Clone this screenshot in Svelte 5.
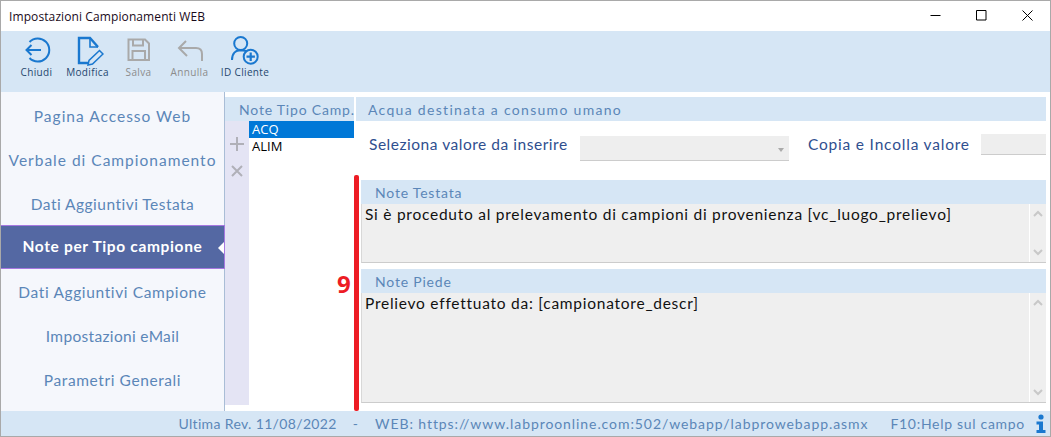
<script lang="ts">
	const tools = [
		{ id: 'close', label: 'Chiudi' },
		{ id: 'edit', label: 'Modifica' },
		{ id: 'save', label: 'Salva', disabled: true },
		{ id: 'undo', label: 'Annulla', disabled: true },
		{ id: 'client', label: 'ID Cliente', wide: true }
	];
	// track: letter spacing per label, the original font has uneven widths
	const pages = [
		{ label: 'Pagina Accesso Web', track: 1 },
		{ label: 'Verbale di Campionamento', track: 1 },
		{ label: 'Dati Aggiuntivi Testata', track: 0.48 },
		{ label: 'Note per Tipo campione', track: 0.65 },
		{ label: 'Dati Aggiuntivi Campione', track: 0.63 },
		{ label: 'Impostazioni eMail', track: 0.33 },
		{ label: 'Parametri Generali', track: 0.6 }
	];
	const activePage = 'Note per Tipo campione';
	const types = ['ACQ', 'ALIM'];
	const notes = [
		{
			title: 'Note Testata',
			text: 'Si è proceduto al prelevamento di campioni di provenienza [vc_luogo_prelievo]',
			tall: false
		},
		{ title: 'Note Piede', text: 'Prelievo effettuato da: [campionatore_descr]', tall: true }
	];
</script>

<div class="window">
	<header class="titlebar">
		<span class="title">Impostazioni Campionamenti WEB</span>
		<div class="controls">
			<button aria-label="Riduci a icona">
				<svg width="11" height="11" viewBox="0 0 11 11"><path d="M.5 5.500h10" stroke="#000" fill="none" /></svg>
			</button>
			<button aria-label="Ingrandisci">
				<svg width="11" height="11" viewBox="0 0 11 11"><path d="M.5.500h9.500v9.500H.5z" stroke="#000" fill="none" /></svg>
			</button>
			<button aria-label="Chiudi finestra">
				<svg width="11" height="11" viewBox="0 0 11 11"><path d="M.5.500l10 10M10.500.500l-10 10" stroke="#000" fill="none" /></svg>
			</button>
		</div>
	</header>

	<div class="toolbar">
		{#each tools as tool}
			<button class="tool" class:disabled={tool.disabled} class:wide={tool.wide}>
				<svg width="32" height="32" viewBox="0 0 32 32" fill="none" stroke-width="2">
					{#if tool.id === 'close'}
						<path d="M8.500 8A11.500 11.500 0 1 1 8.500 24" />
						<path d="M5.500 16H20M10.500 11l-5 5 5 5" />
					{:else if tool.id === 'edit'}
						<path d="M26 13L18 4H7v25h10" stroke-width="2.400" />
						<path d="M18 4v9h8" stroke-width="1.600" />
						<path d="M27.500 16.500l3.500 3.500-10.500 10-4.500 1 1-4.500z" stroke-width="1.500" />
					{:else if tool.id === 'save'}
						<path d="M5.500 5.500H22l4 4V26H5.500z" />
						<path d="M10 5.500v6h10v-6M9.500 26v-9H22v9" />
					{:else if tool.id === 'undo'}
						<path d="M12 7l-7 7 8 8M5 14h17q6 0 6 6v7" />
					{:else}
						<circle cx="11.700" cy="9.500" r="6.500" />
						<path d="M3 26c0-7 4-9.500 7-9.500h4c1.500 0 3 .5 4 1" />
						<circle cx="21.700" cy="22.700" r="7" />
						<path d="M21.700 18.500v8.400M17.500 22.700h8.400" stroke-width="2.200" />
					{/if}
				</svg>
				<span>{tool.label}</span>
			</button>
		{/each}
	</div>

	<main>
		<nav class="sidebar">
			{#each pages as page}
				<a
					href="#{page.label}"
					class:active={page.label === activePage}
					style:letter-spacing="{page.track}px">{page.label}</a
				>
			{/each}
		</nav>

		<section class="types">
			<div class="band types-head">Note Tipo Camp.</div>
			<div class="types-body">
				<div class="strip">
					<svg width="14" height="14" viewBox="0 0 14 14"><path d="M7 0v14M0 7h14" stroke="#b0b0b8" stroke-width="2" fill="none" /></svg>
					<svg width="12" height="12" viewBox="0 0 12 12"><path d="M1 1l10 10M11 1L1 11" stroke="#b0b0b8" stroke-width="2" fill="none" /></svg>
				</div>
				<ul>
					{#each types as type, i}
						<li class:selected={i === 0}>{type}</li>
					{/each}
				</ul>
			</div>
		</section>

		<section class="detail">
			<div class="band detail-head">Acqua destinata a consumo umano</div>
			<div class="fields">
				<span class="field-label">Seleziona valore da inserire</span>
				<div class="select"><i></i></div>
				<span class="field-label copy">Copia e Incolla valore</span>
				<div class="input"></div>
			</div>
			<div class="notes">
				{#each notes as note}
					<div class="note" class:tall={note.tall}>
						<div class="band note-head">{note.title}</div>
						<div class="note-box">
							<p>{note.text}</p>
							<div class="scroll">
								<svg width="10" height="7" viewBox="0 0 10 7"><path d="M1 6l4-4 4 4" stroke="#c8c8c8" stroke-width="2" fill="none" /></svg>
								<svg width="10" height="7" viewBox="0 0 10 7"><path d="M1 1l4 4 4-4" stroke="#c8c8c8" stroke-width="2" fill="none" /></svg>
							</div>
						</div>
					</div>
				{/each}
			</div>
		</section>

		<!-- annotation painted over the screenshot -->
		<div class="marker"></div>
		<span class="marker-num">9</span>
	</main>

	<footer class="status">
		<span class="rev">Ultima Rev. 11/08/2022</span>
		<span class="dash">-</span>
		<span class="web">WEB: https://www.labproonline.com:502/webapp/labprowebapp.asmx</span>
		<span class="help">F10:Help sul campo</span>
		<svg class="info" width="12" height="20" viewBox="0 0 12 20" aria-hidden="true">
			<circle cx="6" cy="3" r="2.600" fill="#1a78cf" />
			<path d="M1.500 7.500H8V16h2.500v3H1.500v-3H4v-5.500H1.500z" fill="#1a78cf" />
		</svg>
	</footer>
</div>

<style>
	:global(body) {
		margin: 0;
		background: #fff;
	}

	.window {
		box-sizing: border-box;
		width: 1051px;
		height: 437px;
		border: 1px solid #a9a9a9;
		display: flex;
		flex-direction: column;
		font-family: Lato, 'Open Sans', sans-serif;
		overflow: hidden;
	}

	button {
		appearance: none;
		border: none;
		background: none;
		padding: 0;
		font: inherit;
	}

	.titlebar {
		height: 30px;
		flex: none;
		display: flex;
		align-items: center;
		justify-content: space-between;
		background: #fff;
	}
	.title {
		font-family: 'Open Sans', sans-serif;
		font-size: 12px;
		letter-spacing: 0.1px;
		padding-left: 8px;
		color: #1a0a1a;
	}
	.controls {
		display: flex;
	}
	.controls button {
		width: 46px;
		height: 30px;
		box-sizing: border-box;
		padding-bottom: 2px;
		display: flex;
		align-items: center;
		justify-content: center;
	}

	.toolbar {
		height: 61px;
		flex: none;
		background: #d6e6f5;
		display: flex;
		padding-left: 10px;
		box-sizing: border-box;
	}
	.tool {
		width: 51px;
		display: flex;
		flex-direction: column;
		align-items: center;
		padding-top: 3px;
		color: #26476f;
		stroke: #1a78cf;
		font-family: 'Open Sans', sans-serif;
		font-size: 10px;
		font-weight: 500;
		letter-spacing: 0.35px;
		line-height: 12px;
	}
	.tool.wide {
		width: 60px;
	}
	.tool.disabled {
		color: #8c8c8c;
		stroke: #a9a9a9;
	}

	main {
		flex: 1;
		min-height: 0;
		display: flex;
		position: relative;
	}

	.sidebar {
		box-sizing: border-box;
		width: 224px;
		flex: none;
		padding-top: 1px;
		background: #f5f7fc;
		border-right: 1px solid #a9bdd6;
		display: flex;
		flex-direction: column;
	}
	.sidebar a {
		box-sizing: border-box;
		height: 44px;
		flex: none;
		padding-top: 2px;
		display: flex;
		align-items: center;
		justify-content: center;
		position: relative;
		text-decoration: none;
		color: #5b86b8;
		font-size: 15.500px;
	}
	.sidebar a.active {
		background: #5468a3;
		border: 1px solid #a678e0;
		border-left: none;
		margin-right: -1px;
		padding: 0 0 2px;
		color: #fff;
		font-weight: 700;
	}
	.sidebar a.active::after {
		content: '';
		position: absolute;
		right: 0;
		top: 16px;
		border: 6px solid transparent;
		border-left: none;
		border-right-color: #fff;
	}

	.band {
		height: 24px;
		flex: none;
		background: #d6e6f5;
		color: #5b86b8;
		display: flex;
		align-items: center;
		font-size: 14px;
		letter-spacing: 0.8px;
	}

	.types {
		width: 129px;
		flex: none;
		margin: 5px 0 6px;
		display: flex;
		flex-direction: column;
	}
	.types-head {
		padding-left: 14px;
		white-space: nowrap;
		overflow: hidden;
	}
	.types-body {
		flex: 1;
		display: flex;
	}
	.strip {
		width: 24px;
		background: #e4e4f4;
		display: flex;
		flex-direction: column;
		align-items: center;
		gap: 14px;
		padding-top: 16px;
		box-sizing: border-box;
	}
	ul {
		list-style: none;
		margin: 0;
		padding: 0;
		flex: 1;
		font-family: 'Open Sans', sans-serif;
		font-size: 13px;
	}
	li {
		height: 17px;
		line-height: 17px;
		padding-left: 3px;
		color: #000;
	}
	li.selected {
		background: #0078d7;
		color: #fff;
	}

	.detail {
		flex: 1;
		min-width: 0;
		margin: 5px 4px 8px 2px;
		display: flex;
		flex-direction: column;
	}
	.detail-head {
		padding-left: 12px;
		letter-spacing: 1.300px;
	}
	.fields {
		height: 59px;
		flex: none;
		display: flex;
		align-items: flex-start;
		color: #2f4f8f;
		font-size: 15.500px;
		letter-spacing: 0.53px;
	}
	.field-label {
		line-height: 18px;
		margin-top: 14px;
		margin-left: 13px;
		width: 211px;
		white-space: nowrap;
	}
	.field-label.copy {
		margin-left: 19px;
		width: 173px;
		letter-spacing: 0.8px;
	}
	.select {
		box-sizing: border-box;
		width: 209px;
		height: 25px;
		margin-top: 15px;
		background: #eee;
		border-bottom: 1px solid #ccc;
		position: relative;
	}
	.select i {
		position: absolute;
		right: 5px;
		top: 12px;
		border: 3px solid transparent;
		border-top: 4px solid #aaa;
		border-bottom: none;
	}
	.input {
		box-sizing: border-box;
		flex: 1;
		height: 21px;
		margin-top: 13px;
		background: #eee;
		border-bottom: 1px solid #ccc;
	}

	.notes {
		flex: 1;
		margin-left: 5px;
		display: flex;
		flex-direction: column;
		gap: 6px;
	}
	.note {
		display: flex;
		flex-direction: column;
		height: 83px;
	}
	.note.tall {
		flex: 1;
		height: auto;
	}
	.note-head {
		padding-left: 14px;
	}
	.note-box {
		flex: 1;
		display: flex;
		box-sizing: border-box;
		background: #efefef;
		border-left: 1px solid #d8d8d8;
		border-bottom: 1px solid #ccc;
	}
	.note-box p {
		flex: 1;
		margin: 0;
		padding: 1px 3px;
		color: #111;
		font-size: 15.500px;
		letter-spacing: 0.75px;
		line-height: 18px;
	}
	.scroll {
		width: 16px;
		flex: none;
		border-left: 1px solid #fff;
		display: flex;
		flex-direction: column;
		justify-content: space-between;
		align-items: center;
		padding: 6px 0;
	}

	.marker {
		position: absolute;
		left: 353px;
		top: 83px;
		bottom: 0;
		width: 5px;
		border-radius: 2px;
		background: #ed1c24;
	}
	.marker-num {
		position: absolute;
		left: 336px;
		top: 178px;
		color: #ed1c24;
		font-family: 'Open Sans', sans-serif;
		font-weight: 700;
		font-size: 24px;
		line-height: 28px;
	}

	.status {
		height: 25px;
		flex: none;
		background: #d6e6f5;
		color: #5b86b8;
		display: flex;
		align-items: center;
		justify-content: flex-end;
		font-size: 14px;
		padding-right: 3px;
		white-space: nowrap;
	}
	.rev {
		letter-spacing: 0.35px;
	}
	.dash {
		margin-left: 16px;
	}
	.web {
		margin-left: 17px;
		letter-spacing: 0.92px;
	}
	.help {
		margin-left: 22px;
		letter-spacing: 0.7px;
	}
	.info {
		margin-left: 10px;
	}
</style>
